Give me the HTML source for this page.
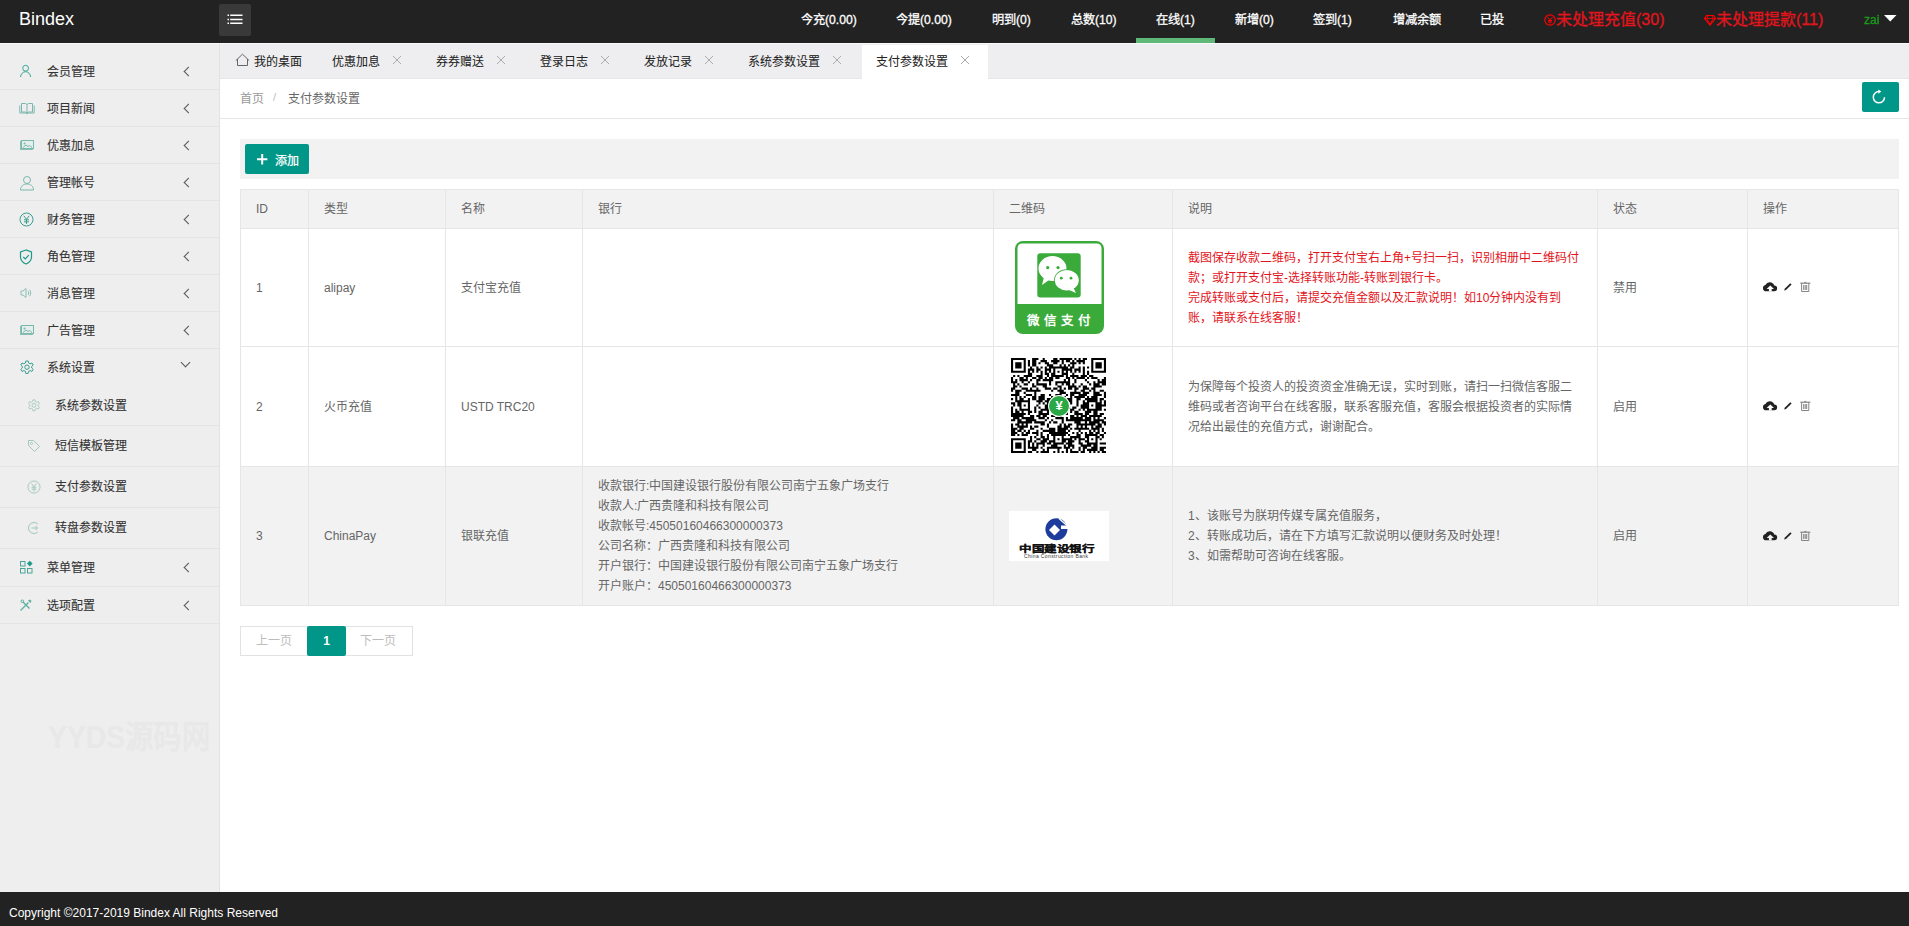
<!DOCTYPE html>
<html lang="zh-CN"><head><meta charset="utf-8">
<style>
*{margin:0;padding:0;box-sizing:border-box}
html,body{width:1909px;height:926px;overflow:hidden;background:#fff;font-family:"Liberation Sans",sans-serif;font-size:12px;color:#333}
.abs{position:absolute}
#hdr{left:0;top:0;width:1909px;height:43px;background:#222}
#logo{left:19px;top:8px;color:#fff;font-size:18px;line-height:22px}
#burger{left:219px;top:4px;width:32px;height:32px;background:#393939;border-radius:2px}
#burger i{position:absolute;left:8px;width:15px;height:2px;background:#fff}
.nav{top:0;height:42px;line-height:40px;color:#fff;font-size:12.2px;-webkit-text-stroke:0.3px currentColor;white-space:nowrap}
.nav.red{color:#f00;font-size:16px}
#side{left:0;top:43px;width:220px;height:849px;background:#eee;border-right:1px solid #e2e2e2;border-top:1px solid #fafafa}
.si{position:absolute;left:0;width:219px;height:37px;border-bottom:1px solid #e4e4e4}
.si span{position:absolute;left:47px;top:10px;font-size:12px;color:#333;line-height:18px;-webkit-text-stroke:0.1px currentColor}
.si.sub{height:41px}
.si.sub span{left:55px;top:11px}
.arr{position:absolute;left:185px;top:15px;width:7px;height:7px;border-left:1px solid #555;border-bottom:1px solid #555;transform:rotate(45deg)}
.arr.dn{left:182px;top:10px;transform:rotate(-45deg)}
.ic{position:absolute;left:19px;top:11px;width:16px;height:16px;line-height:0}
.sub .ic{left:27px;top:13px}
#tabs{left:220px;top:43px;width:1689px;height:36px;background:#eeeef0;border-top:1px solid #fafafa;border-bottom:1px solid #e6e6e6}
.tab{position:absolute;top:1px;height:34px;line-height:30px;font-size:12px;color:#222;white-space:nowrap;-webkit-text-stroke:0.05px currentColor}
.tab.on{background:#fff;height:35px}
.tab .x{position:absolute;top:10px;width:10px;height:10px}
#crumb{left:220px;top:79px;width:1689px;height:40px;background:#fff;border-bottom:1px solid #e6e6e6}
#foot{left:0;top:892px;width:1909px;height:34px;background:#222;color:#fff;font-size:12px}
.btn{background:#009688;border-radius:2px;color:#fff}
#tbl{position:absolute;left:240px;top:189px;border-collapse:collapse;table-layout:fixed;width:1658px}
#tbl td,#tbl th{border:1px solid #e6e6e6;padding:9px 15px;line-height:20px;font-size:12px;color:#666;font-weight:normal;text-align:left;vertical-align:middle}
#tbl th{background:#f2f2f2;height:39px;padding-top:0;padding-bottom:0}
#tbl tr.hv td{background:#f2f2f2}
.red{color:#e3141c !important}
.ops svg{vertical-align:middle}
</style></head><body>
<div id="hdr" class="abs">
  <div id="logo" class="abs">Bindex</div>
  <div id="burger" class="abs"><svg class="abs" style="left:0;top:0" width="32" height="32" viewBox="0 0 32 32"><path d="M8.5 11.2h1.5M11.2 11.2h12.3M8.5 15.6h1.5M11.2 15.6h12.3M8.5 19.2h1.5M11.2 19.2h12.3" stroke="#fff" stroke-width="1.5"/></svg></div>
  <div class="abs nav" style="left:801px">今充(0.00)</div>
  <div class="abs nav" style="left:896px">今提(0.00)</div>
  <div class="abs nav" style="left:992px">明到(0)</div>
  <div class="abs nav" style="left:1071px">总数(10)</div>
  <div class="abs nav" style="left:1156px">在线(1)</div>
  <div class="abs" style="left:1136px;top:38px;width:79px;height:5px;background:#5fb878"></div>
  <div class="abs nav" style="left:1235px">新增(0)</div>
  <div class="abs nav" style="left:1313px">签到(1)</div>
  <div class="abs nav" style="left:1393px">增减余额</div>
  <div class="abs nav" style="left:1480px">已投</div>
  <div class="abs nav red" style="left:1544px"><svg width="12" height="12" viewBox="0 0 12 12" style="vertical-align:-1px"><circle cx="6" cy="6" r="5.2" fill="none" stroke="#f00" stroke-width="1.2"/><path d="M3.5 3.2L6 6l2.5-2.8M6 6v3.5M4 6.5h4M4 8h4" fill="none" stroke="#f00" stroke-width="1"/></svg>未处理充值(30)</div>
  <div class="abs nav red" style="left:1704px"><svg width="12" height="12" viewBox="0 0 12 12" style="vertical-align:-1px"><path d="M2.5 1.5h7l2 3L6 11 .5 4.5z" fill="none" stroke="#f00" stroke-width="1.2"/><path d="M.8 4.5h10.4M4 1.5l-1 3 3 6 3-6-1-3" fill="none" stroke="#f00" stroke-width="0.8"/></svg>未处理提款(11)</div>
  <div class="abs nav" style="left:1864px;color:#1a9a1a;font-size:12px">zai</div>
  <svg class="abs" style="left:1884px;top:15px" width="13" height="7" viewBox="0 0 13 7"><path d="M0 0h12.5L6.25 6.5z" fill="#fff"/></svg>
</div>

<div id="side" class="abs">
<div class="si" style="top:9px"><i class="ic"><svg width="14" height="14" viewBox="0 0 14 14"><circle cx="6.6" cy="4.2" r="2.9" fill="none" stroke="#3aa596" stroke-width="1"/><path d="M1.5 13c.3-3 2.4-5.3 5.1-5.3s4.8 2.3 5.1 5.3" fill="none" stroke="#3aa596" stroke-width="1"/></svg></i><span>会员管理</span><b class="arr"></b></div>
<div class="si" style="top:46px"><i class="ic"><svg width="16" height="14" viewBox="0 0 16 14"><path d="M.8 4.5v7.5h6.2l1 .8 1-.8h6.2V4.5" fill="none" stroke="#7ab8ae" stroke-width="1"/><path d="M2.5 2.5h4l1.5 1 1.5-1h4v8.5h-4l-1.5.8-1.5-.8h-4z M8 3.5v8" fill="none" stroke="#7ab8ae" stroke-width="1"/></svg></i><span>项目新闻</span><b class="arr"></b></div>
<div class="si" style="top:83px"><i class="ic"><svg width="16" height="14" viewBox="0 0 16 14"><rect x="1.5" y="3.5" width="12" height="8" fill="none" stroke="#8abfb5" stroke-width="1"/><rect x="2.5" y="2.5" width="12" height="8" fill="#e4efec" stroke="#7ab8ae" stroke-width="1"/><path d="M4 9.5l3-2.5 2 1.5 1.5-1 2.5 2" fill="none" stroke="#7ab8ae" stroke-width="1"/><circle cx="5.5" cy="5.5" r="1" fill="#7ab8ae"/></svg></i><span>优惠加息</span><b class="arr"></b></div>
<div class="si" style="top:120px"><i class="ic"><svg width="16" height="16" viewBox="0 0 16 16"><circle cx="8" cy="5" r="3.5" fill="none" stroke="#7bb8ae" stroke-width="1"/><path d="M1.5 15c0-3.8 2.9-6 6.5-6s6.5 2.2 6.5 6z" fill="none" stroke="#7bb8ae" stroke-width="1"/></svg></i><span>管理帐号</span><b class="arr"></b></div>
<div class="si" style="top:157px"><i class="ic"><svg width="15" height="15" viewBox="0 0 15 15"><circle cx="7.5" cy="7.5" r="6.5" fill="none" stroke="#3a9e90" stroke-width="1"/><path d="M4.8 3.8l2.7 3.5 2.7-3.5M7.5 7.3V12M5 7.8h5M5 9.8h5" fill="none" stroke="#3a9e90" stroke-width="1"/></svg></i><span>财务管理</span><b class="arr"></b></div>
<div class="si" style="top:194px"><i class="ic"><svg width="14" height="16" viewBox="0 0 14 16"><path d="M7 1L1.5 3v5c0 3.5 2.5 5.8 5.5 7 3-1.2 5.5-3.5 5.5-7V3z" fill="none" stroke="#1d9a8a" stroke-width="1.2"/><path d="M4.3 8l2 2 3.5-3.8" fill="none" stroke="#1d9a8a" stroke-width="1.2"/></svg></i><span>角色管理</span><b class="arr"></b></div>
<div class="si" style="top:231px"><i class="ic"><svg width="14" height="14" viewBox="0 0 14 14"><path d="M2 5h2l3-2.5v9L4 9H2z" fill="none" stroke="#8abfb5" stroke-width="1"/><path d="M9 5c.8.6.8 3.4 0 4M10.5 3.8c1.6 1.4 1.6 5 0 6.4" fill="none" stroke="#8abfb5" stroke-width="1"/></svg></i><span>消息管理</span><b class="arr"></b></div>
<div class="si" style="top:268px"><i class="ic"><svg width="16" height="14" viewBox="0 0 16 14"><rect x="1.5" y="3.5" width="12" height="8" fill="none" stroke="#8abfb5" stroke-width="1"/><rect x="2.5" y="2.5" width="12" height="8" fill="#e4efec" stroke="#7ab8ae" stroke-width="1"/><path d="M4 9.5l3-2.5 2 1.5 1.5-1 2.5 2" fill="none" stroke="#7ab8ae" stroke-width="1"/><circle cx="5.5" cy="5.5" r="1" fill="#7ab8ae"/></svg></i><span>广告管理</span><b class="arr"></b></div>
<div class="si" style="top:305px;border-bottom:0"><i class="ic"><svg width="16" height="16" viewBox="0 0 16 16"><path d="M6.8 1h2.4l.4 2 1.5.8 1.9-.8 1.2 2-1.5 1.4v1.6l1.5 1.4-1.2 2-1.9-.8-1.5.8-.4 2H6.8l-.4-2-1.5-.8-1.9.8-1.2-2 1.5-1.4V6.4L1.8 5l1.2-2 1.9.8 1.5-.8z" fill="none" stroke="#3a9e90" stroke-width="1"/><circle cx="8" cy="7.2" r="2.2" fill="none" stroke="#3a9e90" stroke-width="1"/></svg></i><span>系统设置</span><b class="arr dn"></b></div>
<div class="si sub" style="top:342px;height:40px"><i class="ic"><svg width="14" height="14" viewBox="0 0 16 16"><path d="M6.8 1h2.4l.4 2 1.5.8 1.9-.8 1.2 2-1.5 1.4v1.6l1.5 1.4-1.2 2-1.9-.8-1.5.8-.4 2H6.8l-.4-2-1.5-.8-1.9.8-1.2-2 1.5-1.4V6.4L1.8 5l1.2-2 1.9.8 1.5-.8z" fill="none" stroke="#a2c6bd" stroke-width="1"/><circle cx="8" cy="7.2" r="2.2" fill="none" stroke="#a2c6bd" stroke-width="1"/></svg></i><span>系统参数设置</span></div>
<div class="si sub" style="top:382px"><i class="ic"><svg width="14" height="14" viewBox="0 0 14 14"><path d="M1.5 1.5h5l6 6-5 5-6-6z" fill="none" stroke="#a2c6bd" stroke-width="1"/><circle cx="4.5" cy="4.5" r="1" fill="none" stroke="#a2c6bd" stroke-width="1"/></svg></i><span>短信模板管理</span></div>
<div class="si sub" style="top:423px"><i class="ic"><svg width="14" height="14" viewBox="0 0 15 15"><circle cx="7.5" cy="7.5" r="6.5" fill="none" stroke="#a2c6bd" stroke-width="1"/><path d="M4.8 3.8l2.7 3.5 2.7-3.5M7.5 7.3V12M5 7.8h5M5 9.8h5" fill="none" stroke="#a2c6bd" stroke-width="1"/></svg></i><span>支付参数设置</span></div>
<div class="si sub" style="top:464px"><i class="ic"><svg width="14" height="14" viewBox="0 0 14 14"><path d="M11 3.2A5.5 5.5 0 1 0 11 10.8" fill="none" stroke="#a2c6bd" stroke-width="1"/><path d="M4.5 7h6M8.5 5l2 2-2 2" fill="none" stroke="#a2c6bd" stroke-width="1"/></svg></i><span>转盘参数设置</span></div>
<div class="si" style="top:505px;height:38px"><i class="ic"><svg width="16" height="16" viewBox="0 0 16 16"><rect x="1.5" y="1.5" width="4.5" height="4.5" fill="none" stroke="#4aa596" stroke-width="1"/><rect x="1.5" y="8.5" width="4.5" height="4.5" fill="none" stroke="#4aa596" stroke-width="1"/><rect x="8.5" y="8.5" width="4.5" height="4.5" fill="none" stroke="#4aa596" stroke-width="1"/><path d="M10.8 .8l2.8 2.8-2.8 2.8-2.8-2.8z" fill="#1d9a8a"/></svg></i><span>菜单管理</span><b class="arr"></b></div>
<div class="si" style="top:543px"><i class="ic"><svg width="14" height="14" viewBox="0 0 14 14"><path d="M3 11L9.5 4.5M4 4l6.5 6.5" fill="none" stroke="#5aaea2" stroke-width="1.3"/><path d="M9 2.5l2.5 2.5 1-2-1.5-1.5z M2 10.5l1.5 1.5-1.5.8-.8-.8z" fill="#5aaea2"/><circle cx="3.3" cy="3.3" r="1.3" fill="none" stroke="#5aaea2" stroke-width="1"/></svg></i><span>选项配置</span><b class="arr"></b></div>
<div class="abs" id="wm" style="left:48px;top:667px;font-size:32px;font-weight:bold;color:#e8e8e8;white-space:nowrap;transform-origin:0 0;transform:scaleX(0.885)">YYDS源码网</div>
</div>

<div id="tabs" class="abs">
  <div class="tab" style="left:1px;width:96px"><svg class="abs" style="left:14px;top:8px" width="16" height="15" viewBox="0 0 16 15"><path d="M.8 7.6L7.5 1.2 14.2 7.6M2.5 6v6.5h10V6" fill="none" stroke="#666" stroke-width="1"/></svg><span class="abs" style="left:33px;top:2px">我的桌面</span></div>
  <div class="tab" style="left:98px;width:102px"><span class="abs" style="left:14px;top:2px">优惠加息</span><svg class="x" style="left:74px" viewBox="0 0 10 10"><path d="M1 1l8 8M9 1L1 9" stroke="#aaa" stroke-width="1"/></svg></div>
  <div class="tab" style="left:202px;width:102px"><span class="abs" style="left:14px;top:2px">券券赠送</span><svg class="x" style="left:74px" viewBox="0 0 10 10"><path d="M1 1l8 8M9 1L1 9" stroke="#aaa" stroke-width="1"/></svg></div>
  <div class="tab" style="left:306px;width:102px"><span class="abs" style="left:14px;top:2px">登录日志</span><svg class="x" style="left:74px" viewBox="0 0 10 10"><path d="M1 1l8 8M9 1L1 9" stroke="#aaa" stroke-width="1"/></svg></div>
  <div class="tab" style="left:410px;width:102px"><span class="abs" style="left:14px;top:2px">发放记录</span><svg class="x" style="left:74px" viewBox="0 0 10 10"><path d="M1 1l8 8M9 1L1 9" stroke="#aaa" stroke-width="1"/></svg></div>
  <div class="tab" style="left:514px;width:126px"><span class="abs" style="left:14px;top:2px">系统参数设置</span><svg class="x" style="left:98px" viewBox="0 0 10 10"><path d="M1 1l8 8M9 1L1 9" stroke="#aaa" stroke-width="1"/></svg></div>
  <div class="tab on" style="left:642px;width:126px"><span class="abs" style="left:14px;top:2px">支付参数设置</span><svg class="x" style="left:98px" viewBox="0 0 10 10"><path d="M1 1l8 8M9 1L1 9" stroke="#aaa" stroke-width="1"/></svg></div>
</div>

<div id="crumb" class="abs">
  <span class="abs" style="left:20px;top:10px;color:#999">首页</span>
  <span class="abs" style="left:53px;top:12px;color:#bbb;font-size:11px">/</span>
  <span class="abs" style="left:68px;top:10px;color:#666">支付参数设置</span>
  <div class="abs btn" style="left:1642px;top:3px;width:37px;height:30px"><svg class="abs" style="left:0;top:0" width="37" height="30" viewBox="0 0 37 30"><path d="M16.9 9.6A5.6 5.6 0 1 0 22.5 15.2" fill="none" stroke="#fff" stroke-width="1.5"/><path d="M16.4 7.4L19.3 9.6 16.4 11.8z" fill="#fff"/></svg></div>
</div>

<div class="abs" style="left:240px;top:139px;width:1659px;height:40px;background:#f2f2f2"></div>
<div class="abs btn" style="left:245px;top:144px;width:64px;height:30px"><svg class="abs" style="left:12px;top:10px" width="11" height="11" viewBox="0 0 11 11"><path d="M5.2 0v10.4M0 5.2h10.4" stroke="#fff" stroke-width="2"/></svg><span class="abs" style="left:30px;top:7px;-webkit-text-stroke:0.25px #fff">添加</span></div>

<table id="tbl">
<colgroup><col style="width:68px"><col style="width:137px"><col style="width:137px"><col style="width:411px"><col style="width:179px"><col style="width:425px"><col style="width:150px"><col style="width:151px"></colgroup>
<tr><th>ID</th><th>类型</th><th>名称</th><th>银行</th><th>二维码</th><th>说明</th><th>状态</th><th>操作</th></tr>
<tr style="height:118px"><td>1</td><td>alipay</td><td>支付宝充值</td><td></td><td id="wx"></td>
<td class="red">截图保存收款二维码，打开支付宝右上角+号扫一扫，识别相册中二维码付<br>款；或打开支付宝-选择转账功能-转账到银行卡。<br>完成转账或支付后，请提交充值金额以及汇款说明！如10分钟内没有到<br>账，请联系在线客服！</td>
<td>禁用</td><td class="ops"></td></tr>
<tr style="height:120px"><td>2</td><td>火币充值</td><td>USTD TRC20</td><td></td><td id="qr"></td>
<td>为保障每个投资人的投资资金准确无误，实时到账，请扫一扫微信客服二<br>维码或者咨询平台在线客服，联系客服充值，客服会根据投资者的实际情<br>况给出最佳的充值方式，谢谢配合。</td>
<td>启用</td><td class="ops"></td></tr>
<tr class="hv" style="height:139px"><td>3</td><td>ChinaPay</td><td>银联充值</td>
<td>收款银行:中国建设银行股份有限公司南宁五象广场支行<br>收款人:广西贵隆和科技有限公司<br>收款帐号:45050160466300000373<br>公司名称：广西贵隆和科技有限公司<br>开户银行：中国建设银行股份有限公司南宁五象广场支行<br>开户账户：45050160466300000373</td>
<td id="ccb"></td>
<td>1、该账号为朕玥传媒专属充值服务，<br>2、转账成功后，请在下方填写汇款说明以便财务及时处理！<br>3、如需帮助可咨询在线客服。</td>
<td>启用</td><td class="ops"></td></tr>
</table>

<svg class="abs" style="left:1009px;top:235px" width="100" height="100" viewBox="0 0 100 100">
<rect x="6" y="6" width="89" height="93" rx="8" fill="#3aaa3a"/>
<path d="M8.5 69V13.5q0-5 5-5h74q5 0 5 5V69z" fill="#fff"/>
<rect x="28.3" y="18.3" width="43.4" height="44.3" rx="3" fill="#3aaa3a"/>
<ellipse cx="43.5" cy="33.5" rx="14" ry="12.4" fill="#fff"/>
<path d="M35 42l-2 8 7-5z" fill="#fff"/>
<ellipse cx="57.8" cy="45.2" rx="12.8" ry="10.9" fill="#3aaa3a"/>
<ellipse cx="57.8" cy="45.2" rx="12" ry="10.2" fill="#fff"/>
<path d="M64 52l3 6-7-3z" fill="#fff"/>
<circle cx="38.7" cy="32.6" r="1.6" fill="#3aaa3a"/><circle cx="49" cy="32.6" r="1.6" fill="#3aaa3a"/>
<circle cx="52.3" cy="43.2" r="1.4" fill="#3aaa3a"/><circle cx="62" cy="43.2" r="1.4" fill="#3aaa3a"/>
<text x="17.5" y="89.5" font-size="12.5" font-weight="bold" fill="#fff" letter-spacing="4" font-family="Liberation Sans,sans-serif">微信支付</text>
</svg>
<div class="abs" style="left:1011px;top:358px;width:95px;height:95px"><svg width="95" height="95" viewBox="0 0 45 45"><path d="M0 0h7v1h-7zM10 0h3v1h-3zM15 0h1v1h-1zM20 0h2v1h-2zM23 0h6v1h-6zM30 0h1v1h-1zM32 0h1v1h-1zM34 0h2v1h-2zM38 0h7v1h-7zM0 1h1v1h-1zM6 1h1v1h-1zM8 1h1v1h-1zM10 1h2v1h-2zM14 1h3v1h-3zM19 1h4v1h-4zM24 1h1v1h-1zM26 1h2v1h-2zM29 1h1v1h-1zM31 1h4v1h-4zM38 1h1v1h-1zM44 1h1v1h-1zM0 2h1v1h-1zM2 2h3v1h-3zM6 2h1v1h-1zM8 2h1v1h-1zM10 2h2v1h-2zM13 2h1v1h-1zM16 2h2v1h-2zM20 2h2v1h-2zM24 2h1v1h-1zM28 2h3v1h-3zM32 2h1v1h-1zM34 2h1v1h-1zM38 2h1v1h-1zM40 2h3v1h-3zM44 2h1v1h-1zM0 3h1v1h-1zM2 3h3v1h-3zM6 3h1v1h-1zM8 3h1v1h-1zM10 3h2v1h-2zM17 3h3v1h-3zM23 3h1v1h-1zM25 3h1v1h-1zM27 3h1v1h-1zM29 3h1v1h-1zM38 3h1v1h-1zM40 3h3v1h-3zM44 3h1v1h-1zM0 4h1v1h-1zM2 4h3v1h-3zM6 4h1v1h-1zM9 4h1v1h-1zM12 4h1v1h-1zM14 4h1v1h-1zM16 4h1v1h-1zM18 4h9v1h-9zM28 4h2v1h-2zM32 4h1v1h-1zM34 4h1v1h-1zM36 4h1v1h-1zM38 4h1v1h-1zM40 4h3v1h-3zM44 4h1v1h-1zM0 5h1v1h-1zM6 5h1v1h-1zM8 5h3v1h-3zM12 5h2v1h-2zM16 5h3v1h-3zM20 5h1v1h-1zM24 5h5v1h-5zM30 5h3v1h-3zM34 5h1v1h-1zM38 5h1v1h-1zM44 5h1v1h-1zM0 6h7v1h-7zM8 6h1v1h-1zM10 6h1v1h-1zM12 6h1v1h-1zM14 6h1v1h-1zM16 6h1v1h-1zM18 6h1v1h-1zM20 6h1v1h-1zM22 6h1v1h-1zM24 6h1v1h-1zM26 6h1v1h-1zM28 6h1v1h-1zM30 6h1v1h-1zM32 6h1v1h-1zM34 6h1v1h-1zM36 6h1v1h-1zM38 6h7v1h-7zM8 7h2v1h-2zM14 7h1v1h-1zM16 7h2v1h-2zM19 7h2v1h-2zM24 7h3v1h-3zM29 7h1v1h-1zM34 7h1v1h-1zM36 7h1v1h-1zM1 8h1v1h-1zM3 8h1v1h-1zM6 8h4v1h-4zM12 8h3v1h-3zM17 8h1v1h-1zM19 8h6v1h-6zM26 8h1v1h-1zM28 8h4v1h-4zM33 8h3v1h-3zM37 8h2v1h-2zM0 9h1v1h-1zM4 9h2v1h-2zM7 9h1v1h-1zM10 9h2v1h-2zM13 9h2v1h-2zM16 9h1v1h-1zM18 9h2v1h-2zM21 9h2v1h-2zM26 9h2v1h-2zM29 9h1v1h-1zM31 9h4v1h-4zM36 9h1v1h-1zM38 9h3v1h-3zM44 9h1v1h-1zM0 10h1v1h-1zM2 10h1v1h-1zM4 10h4v1h-4zM9 10h1v1h-1zM12 10h2v1h-2zM15 10h5v1h-5zM25 10h1v1h-1zM27 10h1v1h-1zM30 10h1v1h-1zM35 10h1v1h-1zM41 10h1v1h-1zM43 10h2v1h-2zM0 11h3v1h-3zM5 11h1v1h-1zM8 11h1v1h-1zM12 11h1v1h-1zM18 11h1v1h-1zM21 11h7v1h-7zM30 11h1v1h-1zM36 11h1v1h-1zM39 11h1v1h-1zM41 11h4v1h-4zM1 12h1v1h-1zM3 12h1v1h-1zM6 12h2v1h-2zM10 12h1v1h-1zM12 12h5v1h-5zM18 12h1v1h-1zM21 12h1v1h-1zM24 12h1v1h-1zM26 12h2v1h-2zM29 12h1v1h-1zM33 12h1v1h-1zM37 12h1v1h-1zM39 12h3v1h-3zM43 12h2v1h-2zM1 13h2v1h-2zM4 13h1v1h-1zM10 13h2v1h-2zM15 13h2v1h-2zM22 13h2v1h-2zM27 13h4v1h-4zM32 13h1v1h-1zM34 13h2v1h-2zM39 13h4v1h-4zM0 14h2v1h-2zM5 14h3v1h-3zM9 14h1v1h-1zM12 14h1v1h-1zM16 14h3v1h-3zM20 14h2v1h-2zM23 14h1v1h-1zM25 14h1v1h-1zM27 14h2v1h-2zM30 14h2v1h-2zM34 14h3v1h-3zM38 14h2v1h-2zM0 15h1v1h-1zM2 15h3v1h-3zM7 15h7v1h-7zM19 15h1v1h-1zM22 15h3v1h-3zM30 15h1v1h-1zM33 15h2v1h-2zM37 15h1v1h-1zM39 15h1v1h-1zM42 15h2v1h-2zM2 16h2v1h-2zM6 16h1v1h-1zM11 16h1v1h-1zM23 16h3v1h-3zM28 16h5v1h-5zM34 16h3v1h-3zM39 16h3v1h-3zM44 16h1v1h-1zM0 17h4v1h-4zM7 17h3v1h-3zM11 17h1v1h-1zM14 17h2v1h-2zM18 17h1v1h-1zM21 17h3v1h-3zM26 17h1v1h-1zM28 17h2v1h-2zM32 17h4v1h-4zM39 17h4v1h-4zM44 17h1v1h-1zM2 18h1v1h-1zM4 18h1v1h-1zM6 18h1v1h-1zM10 18h2v1h-2zM13 18h3v1h-3zM19 18h1v1h-1zM21 18h1v1h-1zM23 18h1v1h-1zM25 18h1v1h-1zM28 18h1v1h-1zM30 18h5v1h-5zM36 18h1v1h-1zM38 18h3v1h-3zM44 18h1v1h-1zM0 19h1v1h-1zM2 19h1v1h-1zM4 19h2v1h-2zM8 19h1v1h-1zM10 19h2v1h-2zM13 19h3v1h-3zM17 19h2v1h-2zM20 19h1v1h-1zM24 19h1v1h-1zM26 19h3v1h-3zM31 19h2v1h-2zM35 19h6v1h-6zM42 19h2v1h-2zM2 20h7v1h-7zM12 20h3v1h-3zM16 20h3v1h-3zM20 20h5v1h-5zM26 20h3v1h-3zM31 20h1v1h-1zM34 20h1v1h-1zM36 20h5v1h-5zM42 20h1v1h-1zM44 20h1v1h-1zM0 21h2v1h-2zM3 21h2v1h-2zM8 21h1v1h-1zM13 21h1v1h-1zM15 21h1v1h-1zM17 21h1v1h-1zM20 21h1v1h-1zM24 21h1v1h-1zM28 21h1v1h-1zM31 21h1v1h-1zM34 21h3v1h-3zM40 21h3v1h-3zM44 21h1v1h-1zM1 22h1v1h-1zM3 22h2v1h-2zM6 22h1v1h-1zM8 22h1v1h-1zM12 22h1v1h-1zM16 22h2v1h-2zM20 22h1v1h-1zM22 22h1v1h-1zM24 22h2v1h-2zM31 22h1v1h-1zM33 22h4v1h-4zM38 22h1v1h-1zM40 22h5v1h-5zM0 23h1v1h-1zM4 23h1v1h-1zM8 23h1v1h-1zM11 23h1v1h-1zM13 23h1v1h-1zM16 23h5v1h-5zM24 23h1v1h-1zM26 23h2v1h-2zM29 23h2v1h-2zM33 23h4v1h-4zM40 23h3v1h-3zM0 24h1v1h-1zM2 24h1v1h-1zM4 24h5v1h-5zM11 24h1v1h-1zM14 24h4v1h-4zM19 24h6v1h-6zM28 24h2v1h-2zM32 24h1v1h-1zM34 24h1v1h-1zM36 24h7v1h-7zM44 24h1v1h-1zM0 25h1v1h-1zM2 25h2v1h-2zM5 25h1v1h-1zM8 25h2v1h-2zM11 25h1v1h-1zM13 25h2v1h-2zM17 25h1v1h-1zM20 25h2v1h-2zM26 25h1v1h-1zM28 25h1v1h-1zM30 25h2v1h-2zM35 25h3v1h-3zM39 25h2v1h-2zM0 26h7v1h-7zM8 26h1v1h-1zM13 26h5v1h-5zM20 26h1v1h-1zM22 26h1v1h-1zM24 26h3v1h-3zM30 26h4v1h-4zM35 26h2v1h-2zM39 26h2v1h-2zM42 26h2v1h-2zM0 27h6v1h-6zM9 27h2v1h-2zM12 27h2v1h-2zM15 27h2v1h-2zM19 27h2v1h-2zM22 27h2v1h-2zM28 27h2v1h-2zM31 27h1v1h-1zM33 27h3v1h-3zM37 27h6v1h-6zM1 28h3v1h-3zM5 28h6v1h-6zM13 28h3v1h-3zM17 28h1v1h-1zM21 28h4v1h-4zM26 28h1v1h-1zM28 28h6v1h-6zM35 28h3v1h-3zM39 28h1v1h-1zM41 28h1v1h-1zM44 28h1v1h-1zM0 29h2v1h-2zM3 29h2v1h-2zM7 29h5v1h-5zM16 29h1v1h-1zM19 29h1v1h-1zM24 29h1v1h-1zM26 29h12v1h-12zM39 29h5v1h-5zM3 30h7v1h-7zM11 30h5v1h-5zM18 30h1v1h-1zM20 30h2v1h-2zM24 30h1v1h-1zM30 30h3v1h-3zM35 30h1v1h-1zM37 30h5v1h-5zM43 30h2v1h-2zM0 31h1v1h-1zM2 31h2v1h-2zM5 31h1v1h-1zM7 31h1v1h-1zM14 31h2v1h-2zM17 31h1v1h-1zM23 31h1v1h-1zM25 31h1v1h-1zM27 31h2v1h-2zM31 31h9v1h-9zM41 31h2v1h-2zM44 31h1v1h-1zM0 32h1v1h-1zM3 32h5v1h-5zM9 32h1v1h-1zM11 32h2v1h-2zM17 32h1v1h-1zM22 32h2v1h-2zM25 32h3v1h-3zM31 32h1v1h-1zM33 32h1v1h-1zM35 32h1v1h-1zM38 32h1v1h-1zM40 32h3v1h-3zM0 33h3v1h-3zM4 33h2v1h-2zM9 33h2v1h-2zM14 33h1v1h-1zM18 33h3v1h-3zM22 33h5v1h-5zM28 33h1v1h-1zM30 33h7v1h-7zM38 33h4v1h-4zM43 33h1v1h-1zM0 34h2v1h-2zM3 34h2v1h-2zM6 34h1v1h-1zM8 34h1v1h-1zM12 34h1v1h-1zM15 34h6v1h-6zM22 34h4v1h-4zM27 34h1v1h-1zM32 34h1v1h-1zM37 34h1v1h-1zM39 34h1v1h-1zM41 34h1v1h-1zM43 34h1v1h-1zM0 35h3v1h-3zM5 35h1v1h-1zM7 35h2v1h-2zM10 35h3v1h-3zM14 35h1v1h-1zM18 35h9v1h-9zM29 35h1v1h-1zM31 35h1v1h-1zM33 35h1v1h-1zM35 35h1v1h-1zM37 35h2v1h-2zM40 35h2v1h-2zM44 35h1v1h-1zM0 36h2v1h-2zM3 36h1v1h-1zM5 36h3v1h-3zM12 36h1v1h-1zM14 36h1v1h-1zM17 36h1v1h-1zM19 36h7v1h-7zM27 36h1v1h-1zM31 36h2v1h-2zM35 36h6v1h-6zM42 36h2v1h-2zM9 37h1v1h-1zM11 37h1v1h-1zM14 37h2v1h-2zM17 37h1v1h-1zM20 37h1v1h-1zM24 37h1v1h-1zM28 37h5v1h-5zM35 37h2v1h-2zM40 37h2v1h-2zM43 37h1v1h-1zM0 38h7v1h-7zM9 38h1v1h-1zM12 38h2v1h-2zM15 38h3v1h-3zM20 38h1v1h-1zM22 38h1v1h-1zM24 38h5v1h-5zM30 38h1v1h-1zM32 38h3v1h-3zM36 38h1v1h-1zM38 38h1v1h-1zM40 38h1v1h-1zM42 38h1v1h-1zM0 39h1v1h-1zM6 39h1v1h-1zM8 39h2v1h-2zM11 39h1v1h-1zM14 39h3v1h-3zM18 39h3v1h-3zM24 39h2v1h-2zM27 39h3v1h-3zM32 39h1v1h-1zM35 39h2v1h-2zM40 39h1v1h-1zM0 40h1v1h-1zM2 40h3v1h-3zM6 40h1v1h-1zM8 40h1v1h-1zM10 40h1v1h-1zM12 40h4v1h-4zM17 40h2v1h-2zM20 40h5v1h-5zM26 40h3v1h-3zM32 40h2v1h-2zM36 40h5v1h-5zM42 40h3v1h-3zM0 41h1v1h-1zM2 41h3v1h-3zM6 41h1v1h-1zM8 41h1v1h-1zM10 41h1v1h-1zM12 41h1v1h-1zM15 41h1v1h-1zM19 41h3v1h-3zM25 41h1v1h-1zM27 41h3v1h-3zM33 41h5v1h-5zM39 41h2v1h-2zM0 42h1v1h-1zM2 42h3v1h-3zM6 42h1v1h-1zM8 42h5v1h-5zM14 42h1v1h-1zM17 42h7v1h-7zM25 42h3v1h-3zM29 42h1v1h-1zM32 42h1v1h-1zM34 42h2v1h-2zM38 42h3v1h-3zM42 42h3v1h-3zM0 43h1v1h-1zM6 43h1v1h-1zM10 43h2v1h-2zM15 43h1v1h-1zM17 43h1v1h-1zM22 43h1v1h-1zM26 43h1v1h-1zM28 43h1v1h-1zM32 43h1v1h-1zM34 43h1v1h-1zM36 43h5v1h-5zM42 43h2v1h-2zM0 44h7v1h-7zM8 44h2v1h-2zM12 44h1v1h-1zM14 44h4v1h-4zM20 44h1v1h-1zM22 44h1v1h-1zM24 44h1v1h-1zM26 44h1v1h-1zM28 44h4v1h-4zM33 44h2v1h-2zM37 44h1v1h-1zM39 44h1v1h-1zM41 44h1v1h-1zM43 44h2v1h-2z" fill="#000"/></svg><div class="abs" style="left:37px;top:37px;width:22px;height:22px;border-radius:50%;background:#fff"></div><div class="abs" style="left:38px;top:38px;width:20px;height:20px;border-radius:50%;background:#2aa845;color:#fff;font-size:13px;font-weight:bold;text-align:center;line-height:20px">¥</div></div>
<svg class="abs" style="left:1009px;top:511px" width="100" height="50" viewBox="0 0 100 50">
<rect width="100" height="50" fill="#fff"/>
<circle cx="47.4" cy="18.2" r="11" fill="#1d3c9c"/>
<path d="M45.5 13.5l5.5 5.5-5.5 5.5-5.5-5.5z" fill="#fff"/>
<path d="M50 7.5l8 7" stroke="#fff" stroke-width="1.4"/>
<rect x="52" y="14.5" width="8" height="3.5" fill="#fff"/>
<text x="10" y="41" font-size="9" font-weight="bold" fill="#111" textLength="75" lengthAdjust="spacingAndGlyphs" font-family="Liberation Sans,sans-serif" stroke="#111" stroke-width="0.2">中国建设银行</text>
<text x="15" y="46.5" font-size="5" fill="#333" font-family="Liberation Sans,sans-serif" textLength="64">China Construction Bank</text>
</svg>
<svg class="abs" style="left:1762px;top:400px" width="50" height="12" viewBox="0 0 50 12">
<path d="M4 10.3A3.2 3.2 0 0 1 3.4 4 4.8 4.8 0 0 1 12.2 4.5 2.9 2.9 0 0 1 12.3 10.3z" fill="#222"/>
<path d="M8.3 4.6L4.6 8.1h2.3v2.4h2.8V8.1H12z" fill="#fff"/>
<path d="M22.2 9.6l.5-1.8 5.6-5.6 1.3 1.3-5.6 5.6z" fill="#222"/>
<path d="M38.3 2.2h10" stroke="#777" stroke-width="1.1" fill="none"/>
<path d="M42.3 1.4h2" stroke="#777" stroke-width="0.8" fill="none"/>
<path d="M39.6 2.6v7.9h7.2V2.6M41.7 4v5M43.2 4v5M44.7 4v5" stroke="#777" stroke-width="0.9" fill="none"/>
</svg><svg class="abs" style="left:1762px;top:281px" width="50" height="12" viewBox="0 0 50 12">
<path d="M4 10.3A3.2 3.2 0 0 1 3.4 4 4.8 4.8 0 0 1 12.2 4.5 2.9 2.9 0 0 1 12.3 10.3z" fill="#222"/>
<path d="M8.3 4.6L4.6 8.1h2.3v2.4h2.8V8.1H12z" fill="#fff"/>
<path d="M22.2 9.6l.5-1.8 5.6-5.6 1.3 1.3-5.6 5.6z" fill="#222"/>
<path d="M38.3 2.2h10" stroke="#777" stroke-width="1.1" fill="none"/>
<path d="M42.3 1.4h2" stroke="#777" stroke-width="0.8" fill="none"/>
<path d="M39.6 2.6v7.9h7.2V2.6M41.7 4v5M43.2 4v5M44.7 4v5" stroke="#777" stroke-width="0.9" fill="none"/>
</svg><svg class="abs" style="left:1762px;top:530px" width="50" height="12" viewBox="0 0 50 12">
<path d="M4 10.3A3.2 3.2 0 0 1 3.4 4 4.8 4.8 0 0 1 12.2 4.5 2.9 2.9 0 0 1 12.3 10.3z" fill="#222"/>
<path d="M8.3 4.6L4.6 8.1h2.3v2.4h2.8V8.1H12z" fill="#f2f2f2"/>
<path d="M22.2 9.6l.5-1.8 5.6-5.6 1.3 1.3-5.6 5.6z" fill="#222"/>
<path d="M38.3 2.2h10" stroke="#777" stroke-width="1.1" fill="none"/>
<path d="M42.3 1.4h2" stroke="#777" stroke-width="0.8" fill="none"/>
<path d="M39.6 2.6v7.9h7.2V2.6M41.7 4v5M43.2 4v5M44.7 4v5" stroke="#777" stroke-width="0.9" fill="none"/>
</svg>
<div class="abs" style="left:240px;top:626px;width:173px;height:30px;border:1px solid #e2e2e2;background:#fff"></div>
<span class="abs" style="left:256px;top:631px;color:#bcbcbc">上一页</span>
<div class="abs btn" style="left:307px;top:626px;width:39px;height:30px;text-align:center;line-height:30px;font-weight:bold">1</div>
<span class="abs" style="left:360px;top:631px;color:#bcbcbc">下一页</span>

<div id="foot" class="abs"><div class="abs" style="left:9px;top:14px">Copyright ©2017-2019 Bindex All Rights Reserved</div></div>
</body></html>
